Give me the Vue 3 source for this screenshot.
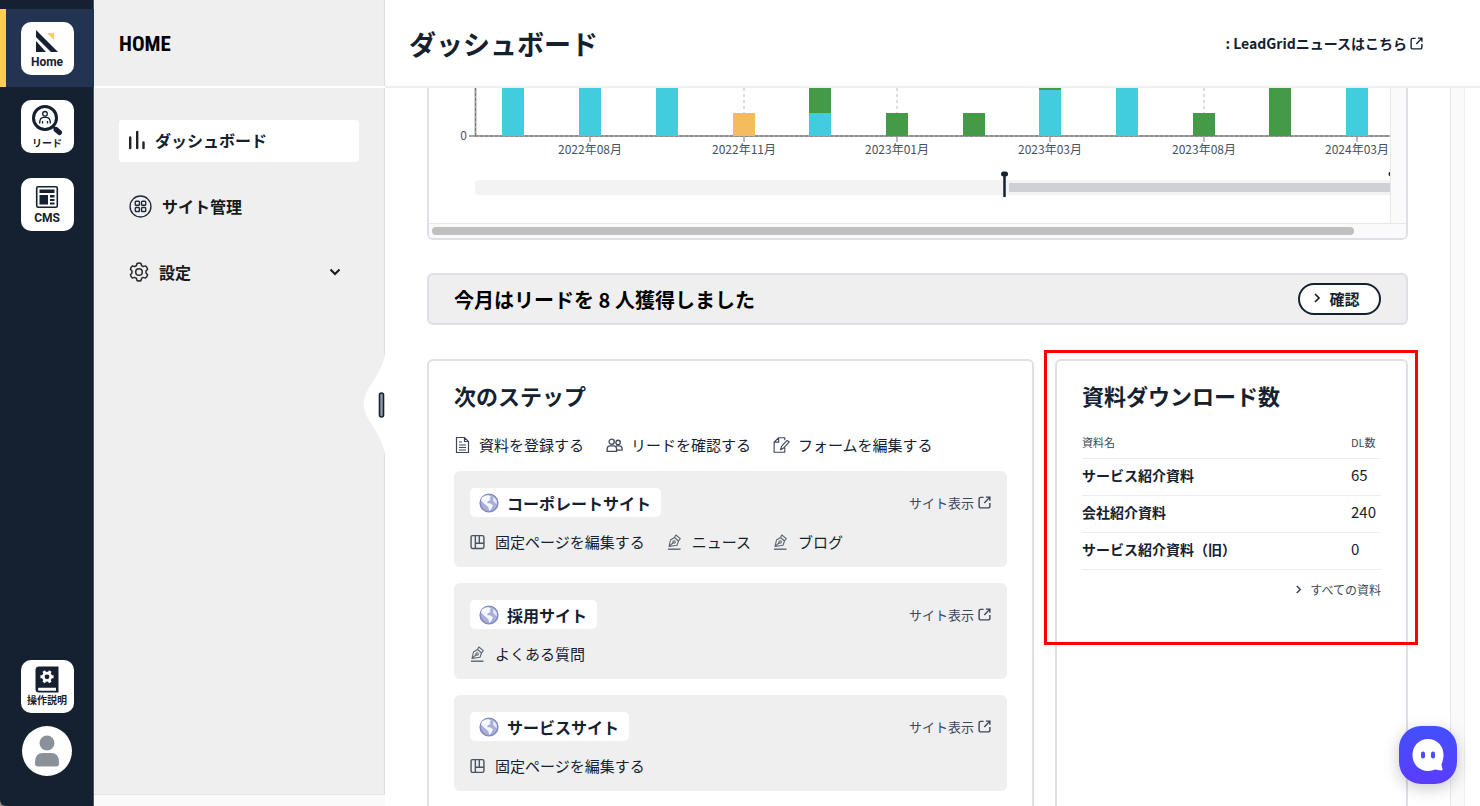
<script setup>
const menu = [
  { label: 'ダッシュボード', icon: 'bars', width: 16, height: 20, active: true },
  { label: 'サイト管理', icon: 'grid', width: 23, height: 23 },
  { label: '設定', icon: 'gear', width: 20, height: 20, expandable: true }
]

const quickLinks = [
  { label: '資料を登録する', icon: 'doc' },
  { label: 'リードを確認する', icon: 'people' },
  { label: 'フォームを編集する', icon: 'form' }
]

const sites = [
  {
    name: 'コーポレートサイト',
    links: [
      { label: '固定ページを編集する', icon: 'layout' },
      { label: 'ニュース', icon: 'pen' },
      { label: 'ブログ', icon: 'pen' }
    ]
  },
  { name: '採用サイト', links: [{ label: 'よくある質問', icon: 'pen' }] },
  { name: 'サービスサイト', links: [{ label: '固定ページを編集する', icon: 'layout' }] }
]

const downloads = [
  { name: 'サービス紹介資料', count: 65 },
  { name: '会社紹介資料', count: 240 },
  { name: 'サービス紹介資料（旧）', count: 0 }
]

const CYAN = '#41cddd'
const GREEN = '#459a47'
const ORANGE = '#f4bb5f'

// Each column is a stack of [colour, top, bottom] in chart units.
const columns = [
  { stack: [[CYAN, 0, 48]] },
  { stack: [[CYAN, 0, 48]], label: '2022年08月' },
  { stack: [[CYAN, 0, 48]] },
  { stack: [[ORANGE, 25, 48]], label: '2022年11月' },
  { stack: [[GREEN, 0, 25], [CYAN, 25, 48]] },
  { stack: [[GREEN, 25, 48]], label: '2023年01月' },
  { stack: [[GREEN, 25, 48]] },
  { stack: [[GREEN, 0, 2], [CYAN, 2, 48]], label: '2023年03月' },
  { stack: [[CYAN, 0, 48]] },
  { stack: [[GREEN, 25, 48]], label: '2023年08月' },
  { stack: [[GREEN, 0, 48]] },
  { stack: [[CYAN, 0, 48]], label: '2024年03月' }
].map((c, i) => ({ ...c, x: Math.round(84.4 + i * 76.7) }))
</script>

<template>
  <div class="app">
    <svg class="sprite" aria-hidden="true">
      <symbol id="i-bars" viewBox="1 0 16 20">
        <path d="M2.200 7.500v10.500M9.200 2v16M15.500 12.500v5.500" fill="none" stroke="#222" stroke-width="2.400" stroke-linecap="round" />
      </symbol>
      <symbol id="i-grid" viewBox="0 0 22 22">
        <g fill="none" stroke="#1d2a3c" stroke-width="1.300">
          <circle cx="11" cy="11" r="10" />
          <rect x="6" y="6" width="4" height="3.800" rx="0.800" />
          <rect x="12" y="6" width="4" height="3.800" rx="0.800" />
          <rect x="6" y="12" width="4" height="3.800" rx="0.800" />
          <rect x="12" y="12" width="4" height="3.800" rx="0.800" />
        </g>
      </symbol>
      <symbol id="i-gear" viewBox="0 0 20 20">
        <g fill="none" stroke="#2a2a2a" stroke-width="1.500" stroke-linejoin="round">
          <path d="M8 1.500Q10 .5 12 1.500L12.600 3.800Q13.400 4 14.200 4.600L16.500 3.900Q18.200 5.200 18.600 7.300L17 9V11L18.600 12.700Q18 15 16.500 16.100L14.200 15.400Q13.400 16 12.600 16.200L12 18.500Q10 19.500 8 18.500L7.400 16.200Q6.600 16 5.800 15.400L3.500 16.100Q1.900 15 1.400 12.700L3 11V9L1.400 7.300Q1.900 5 3.500 3.900L5.800 4.600Q6.600 4 7.400 3.800Z" />
          <circle cx="10" cy="10" r="3.300" />
        </g>
      </symbol>
      <symbol id="i-out" viewBox="0 0 14 14">
        <path d="M6 1.500H3A1.700 1.700 0 0 0 1.200 3.200V11A1.700 1.700 0 0 0 3 12.800H11A1.700 1.700 0 0 0 12.800 11V7.500M8.500 1.200H12.800V5.200M12.800 1.200L6.800 7.600" fill="none" stroke="currentColor" stroke-width="1.500" />
      </symbol>
      <symbol id="i-doc" viewBox="0 0 16 18">
        <path d="M2 1.500H10L14 5.500V16.500H2ZM10 1.500V5.500H14M4.500 6H7.500M4.500 9H11.500M4.500 11.500H11.500M4.500 14H11.500" fill="none" stroke="#3b4757" stroke-width="1.200" />
      </symbol>
      <symbol id="i-people" viewBox="0 0 18 18">
        <g fill="none" stroke="#3f4b5b" stroke-width="1.400" stroke-linejoin="round">
          <circle cx="6" cy="5.500" r="2.700" />
          <circle cx="12.800" cy="6.300" r="2.300" />
          <path d="M1.200 15.800V13A3.300 3.300 0 0 1 4.500 10H8A3.300 3.300 0 0 1 11.200 13V15.800ZM11.200 14.500H17V12.500A3 3 0 0 0 14 10H10.500" />
        </g>
      </symbol>
      <symbol id="i-form" viewBox="0 0 18 18">
        <path d="M12.500 4V1.300H6L1.200 6V16.700H12.500V12M6 1.300V6H1.200M8 14L9 10.500L15 4.200L17.200 5.800L11.200 12.300Z" fill="none" stroke="#3b4757" stroke-width="1.200" stroke-linejoin="round" />
      </symbol>
      <symbol id="i-layout" viewBox="0 0 14 14">
        <path d="M2.500 1H11.500Q13 1 13 2.500V11.500Q13 13 11.500 13H2.500Q1 13 1 11.500V2.500Q1 1 2.500 1ZM5 1V13M8.700 1V8.200M5 8.200H13" fill="none" stroke="#485362" stroke-width="1.300" />
      </symbol>
      <symbol id="i-pen" viewBox="0 0 14 16">
        <g fill="none" stroke="#5a6573" stroke-width="1.100" stroke-linejoin="round">
          <path d="M1.500 12.500L3 6L7 3.500L11 7L9.500 11.200ZM7 3.500L8.300 1L12.800 4.700L11 7M1.800 12.200L6 8.500" />
          <circle cx="6.600" cy="8" r="1.200" />
          <path d="M.5 15.200H13" stroke-width="1.400" />
        </g>
      </symbol>
      <symbol id="i-globe" viewBox="0 0 20 20">
        <circle cx="10" cy="10" r="8.900" fill="#a9afd9" stroke="#8188bf" stroke-width="1.400" />
        <path d="M3 4.500Q6 2 9.500 2.200L12 3.500L10.500 5.500L11.800 7L9 8L8 10L11.500 10.500L14 12.500L12.500 15.500L10.500 18L9.500 14.500L7 12L5 10.500L2 7.500Z" fill="#f7f8fd" />
        <path d="M14.500 3.500L17.500 7L18 11L16 10L14 7.500Z" fill="#e5e8f6" />
      </symbol>
      <symbol id="i-right" viewBox="0 0 8 10">
        <path d="M2 1L6 5L2 9" fill="none" stroke="currentColor" stroke-width="1.700" />
      </symbol>
    </svg>

    <nav class="rail" aria-label="メイン">
      <a href="#home" class="rail-item current">
        <span class="tile">
          <svg width="24" height="24" viewBox="0 0 24 24" aria-hidden="true">
            <path d="M1 1L23 23H16L1 8ZM1 12L11 23H1Z" fill="#152130" />
            <path d="M12 4H19V11Z" fill="#ffcf4d" />
          </svg>
          <span class="tile-en">Home</span>
        </span>
      </a>
      <a href="#leads" class="rail-item">
        <span class="tile">
          <svg width="32" height="32" viewBox="0 0 32 32" aria-hidden="true">
            <circle cx="14" cy="14" r="11.500" fill="none" stroke="#152130" stroke-width="3" />
            <path d="M21.500 22L24 24.500" stroke="#152130" stroke-width="2" />
            <path d="M25 25.500L28.500 28.500" stroke="#152130" stroke-width="5" stroke-linecap="round" />
            <circle cx="14" cy="9.800" r="2.300" fill="none" stroke="#152130" stroke-width="1.300" />
            <path d="M8.700 19.500Q8.500 13.500 12.500 13.300H15.500Q19.500 13.500 19.300 19.500M11.500 19.500V17M16.500 19.500V17" fill="none" stroke="#152130" stroke-width="1.300" />
          </svg>
          <span class="tile-ja">リード</span>
        </span>
      </a>
      <a href="#cms" class="rail-item">
        <span class="tile">
          <svg width="24" height="24" viewBox="0 0 24 24" aria-hidden="true">
            <rect x="1.700" y="1.700" width="20.600" height="20.600" rx="1.500" fill="none" stroke="#152130" stroke-width="1.600" />
            <path d="M4.500 4.500H19.500V8H4.500ZM4.500 10H13V19.500H4.500ZM15 10H19.500V12.500H15ZM15 14H19.500V16H15ZM15 17.500H19.500V19.500H15Z" fill="#152130" />
          </svg>
          <span class="tile-en">CMS</span>
        </span>
      </a>
      <div class="rail-foot">
        <a href="#manual" class="tile">
          <svg width="24" height="27" viewBox="0 0 24 27" aria-hidden="true">
            <path d="M4 .5H23.500V26.500H4Q.5 26.500 .5 23V4Q.5 .5 4 .5Z" fill="#152130" />
            <path d="M3.500 21.800H21V24.800H3.500Q2.300 23.300 3.500 21.800Z" fill="#fff" />
            <circle cx="12" cy="10.800" r="3.700" fill="none" stroke="#fff" stroke-width="2.600" />
            <path d="M12 4.200V7M12 14.600V17.400M6.300 7.500L8.700 8.900M15.300 12.700L17.700 14.100M17.700 7.500L15.300 8.900M8.700 12.700L6.300 14.100" transform="rotate(30 12 10.800)" stroke="#fff" stroke-width="3" />
          </svg>
          <span class="tile-ja">操作説明</span>
        </a>
        <button class="avatar" type="button" aria-label="アカウント">
          <svg width="26" height="32" viewBox="0 0 26 32" aria-hidden="true">
            <circle cx="13" cy="8" r="7.500" fill="#8b9199" />
            <path d="M1 28.500V27Q1 18 9 18H17Q25 18 25 27V28.500Q25 31.500 22 31.500H4Q1 31.500 1 28.500Z" fill="#8b9199" />
          </svg>
        </button>
      </div>
    </nav>

    <aside class="side">
      <h2 class="side-title">HOME</h2>
      <nav class="menu" aria-label="HOME">
        <a v-for="m in menu" :key="m.label" href="#menu" class="menu-item" :class="{ active: m.active }">
          <svg :width="m.width" :height="m.height" aria-hidden="true"><use :href="'#i-' + m.icon" /></svg>
          <span>{{ m.label }}</span>
          <svg v-if="m.expandable" class="caret" width="12" height="8" viewBox="0 0 12 8" aria-hidden="true">
            <path d="M1.500 1.500L6 6L10.500 1.500" fill="none" stroke="#1a1a1a" stroke-width="2" />
          </svg>
        </a>
      </nav>
      <div class="side-track"></div>
      <button class="notch" type="button" aria-label="サイドバーを閉じる">
        <svg width="22" height="104" viewBox="0 0 22 104" aria-hidden="true">
          <path d="M22 0C20 24 1 34 1 52S20 80 22 104Z" fill="#fff" />
          <rect x="16.500" y="41" width="4" height="24" rx="2" fill="#8f9aa3" stroke="#152130" stroke-width="1.600" />
        </svg>
      </button>
    </aside>

    <div class="page">
      <header class="top">
        <h1>ダッシュボード</h1>
        <a href="#news" class="news">: LeadGridニュースはこちら<svg width="13" height="13" aria-hidden="true"><use href="#i-out" /></svg></a>
      </header>
      <div class="body">
        <main class="content">
          <section class="chart-card" aria-label="リード推移">
            <div class="chart-row">
              <div class="chart-view">
                <svg class="chart" width="980" height="135" viewBox="0 0 980 135" role="img" aria-label="月別リード数">
                  <g v-for="(c, i) in columns" :key="i">
                    <template v-if="c.label">
                      <line :x1="c.x" :x2="c.x" y1="0" y2="48" stroke="#ddd" stroke-width="2" stroke-dasharray="3 3" />
                      <line :x1="c.x" :x2="c.x" y1="48" y2="54" stroke="#777" />
                      <text :x="c.x" y="66" text-anchor="middle">{{ c.label }}</text>
                    </template>
                  </g>
                  <line x1="46.500" x2="46.500" y1="0" y2="48" stroke="#a5a5a5" stroke-width="2" />
                  <line x1="40" x2="980" y1="48" y2="48" stroke="#a5a5a5" stroke-width="2" />
                  <line x1="46.500" x2="46.500" y1="0" y2="48" stroke="#777" stroke-dasharray="3 2" />
                  <line x1="46" x2="980" y1="48" y2="48" stroke="#777" stroke-dasharray="3 2" />
                  <g v-for="(c, i) in columns" :key="'b' + i">
                    <rect v-for="(s, j) in c.stack" :key="j" :x="c.x - 11" :y="s[1]" width="22" :height="s[2] - s[1]" :fill="s[0]" />
                  </g>
                  <text x="38" y="52" text-anchor="end">0</text>
                  <rect x="46" y="92" width="940" height="15" rx="4" fill="#f3f3f3" />
                  <rect x="580" y="95" width="400" height="9" fill="#cdd0d5" />
                  <path d="M575.500 86V109" stroke="#152130" stroke-width="2.500" />
                  <rect x="572" y="83.500" width="7" height="5" rx="2.500" fill="#152130" />
                  <circle cx="962" cy="86" r="2.500" fill="#152130" />
                </svg>
              </div>
              <div class="chart-gutter"></div>
            </div>
            <div class="chart-scroll"><div class="thumb"></div></div>
          </section>

          <section class="notice">
            <p>今月はリードを 8 人獲得しました</p>
            <button type="button" class="confirm">
              <svg width="8" height="10" aria-hidden="true"><use href="#i-right" /></svg>確認
            </button>
          </section>

          <div class="cards">
            <section class="card">
              <h2>次のステップ</h2>
              <div class="links quick">
                <a v-for="q in quickLinks" :key="q.label" href="#step">
                  <svg width="17" height="18" aria-hidden="true"><use :href="'#i-' + q.icon" /></svg>{{ q.label }}
                </a>
              </div>
              <div class="sites">
                <article v-for="s in sites" :key="s.name" class="site">
                  <div class="site-head">
                    <h3><svg width="20" height="20" aria-hidden="true"><use href="#i-globe" /></svg>{{ s.name }}</h3>
                    <a href="#site" class="view">サイト表示<svg width="13" height="13" aria-hidden="true"><use href="#i-out" /></svg></a>
                  </div>
                  <div class="links edits">
                    <a v-for="l in s.links" :key="l.label" href="#edit">
                      <svg width="15" height="16" aria-hidden="true"><use :href="'#i-' + l.icon" /></svg>{{ l.label }}
                    </a>
                  </div>
                </article>
              </div>
            </section>

            <section class="card">
              <h2>資料ダウンロード数</h2>
              <table>
                <thead>
                  <tr><th scope="col">資料名</th><th scope="col" class="count">DL数</th></tr>
                </thead>
                <tbody>
                  <tr v-for="d in downloads" :key="d.name">
                    <th scope="row">{{ d.name }}</th>
                    <td class="count">{{ d.count }}</td>
                  </tr>
                </tbody>
              </table>
              <a href="#all" class="all"><svg width="7" height="9" aria-hidden="true"><use href="#i-right" /></svg>すべての資料</a>
              <div class="marker"></div>
            </section>
          </div>
        </main>
        <div class="page-track"></div>
        <div class="page-edge"></div>
      </div>
    </div>

    <button class="chat" type="button" aria-label="チャット">
      <svg width="32" height="34" viewBox="0 0 32 34" aria-hidden="true">
        <path d="M16 1C7 1 .5 7.800 .5 17S7 33 16 33C19 33 21 32 23 31.500C25.500 31.500 28 33 30 32.300C31.500 31.500 29.500 29 29.500 26.500C30.500 23.500 31.500 20.500 31.500 17C31.500 7.800 25 1 16 1Z" fill="#fff" />
        <rect x="9" y="13.500" width="4" height="7" rx="2" fill="#4b4bff" />
        <rect x="19" y="13.500" width="4" height="7" rx="2" fill="#4b4bff" />
      </svg>
    </button>
  </div>
</template>

<style>
body {
  margin: 0;
  overflow: hidden;
}
</style>

<style scoped>
* {
  box-sizing: border-box;
}
.app {
  display: flex;
  height: 100vh;
  overflow: hidden;
  background: #8f8a7c;
  color: #152130;
  font-family: "Noto Sans CJK JP", "Noto Sans", sans-serif;
  font-size: 15px;
}
.sprite {
  position: absolute;
  width: 0;
  height: 0;
}
h1, h2, h3, p {
  margin: 0;
}
a {
  color: inherit;
  text-decoration: none;
}
button {
  font-family: inherit;
  color: inherit;
  padding: 0;
  border: 0;
  cursor: pointer;
}
svg {
  flex: none;
}

.rail {
  display: flex;
  flex-direction: column;
  flex: none;
  width: 94px;
  padding-top: 9px;
  background: #152130;
  border-bottom-left-radius: 6px;
  box-shadow: inset -1px 0 #4c5766;
}
.rail-item {
  display: flex;
  justify-content: center;
  padding: 13px 0 12px;
}
.rail-item.current {
  background: #233452;
  border-left: 6px solid #ffcf4d;
  padding-right: 6px;
}
.tile {
  display: flex;
  flex-direction: column;
  align-items: center;
  justify-content: center;
  width: 53px;
  height: 53px;
  border-radius: 10px;
  background: #fff;
}
.tile-en {
  margin-top: 2px;
  font: 700 12px/14px Roboto, sans-serif;
}
.tile-ja {
  font-size: 10px;
  line-height: 14px;
  font-weight: 700;
}
.rail-foot {
  display: flex;
  flex-direction: column;
  align-items: center;
  gap: 13px;
  margin-top: auto;
  padding-bottom: 30px;
}
.avatar {
  display: flex;
  align-items: center;
  justify-content: center;
  width: 50px;
  height: 50px;
  border-radius: 50%;
  background: #fff;
}

.side {
  position: relative;
  display: flex;
  flex-direction: column;
  flex: none;
  width: 291px;
  background: #efefef;
  box-shadow: inset -2px 0 1px -1px #dcdcdc;
}
.side-title {
  height: 88px;
  padding-left: 25px;
  border-bottom: 2px solid #fff;
  color: #000;
  font: 700 21px/88px "Liberation Sans Narrow", "Roboto Condensed", "DejaVu Sans Condensed", sans-serif;
}
.menu {
  display: flex;
  flex-direction: column;
  gap: 24px;
  padding: 32px 26px 0 25px;
}
.menu-item {
  display: flex;
  align-items: center;
  gap: 10px;
  height: 42px;
  padding: 0 18px 2px 10px;
  border-radius: 3px;
  color: #1a1a1a;
  font-size: 16px;
  font-weight: 700;
}
.menu-item.active {
  background: #fff;
  color: #152130;
}
.caret {
  margin-left: auto;
}
.side-track {
  height: 12px;
  margin-top: auto;
  background: #fafafa;
  border-top: 1px solid #e6e6e6;
}
.notch {
  position: absolute;
  right: 0;
  top: 50%;
  width: 22px;
  height: 104px;
  margin-top: -51px;
  background: none;
}
.notch svg {
  display: block;
}

.page {
  display: flex;
  flex-direction: column;
  flex: 1;
  min-width: 0;
  background: #fff;
}
.top {
  display: flex;
  align-items: center;
  justify-content: space-between;
  flex: none;
  height: 88px;
  padding: 0 57px 0 24px;
  border-bottom: 2px solid #efefef;
}
h1 {
  font-size: 27px;
}
.news {
  display: flex;
  align-items: center;
  gap: 3px;
  font-size: 14px;
  font-weight: 700;
}
.body {
  display: flex;
  flex: 1;
  min-height: 0;
  overflow: hidden;
}
.content {
  flex: 1;
  min-width: 0;
  padding: 0 42px;
}
.page-track {
  width: 15px;
  background: #fafafa;
  border-left: 1px solid #e8e8e8;
  border-right: 1px solid #efefef;
}
.page-edge {
  width: 15px;
}

.chart-card {
  border: 2px solid #dfe0e6;
  border-top: 0;
  border-radius: 0 0 6px 6px;
  overflow: hidden;
}
.chart-row {
  display: flex;
}
.chart-view {
  flex: 1;
  min-width: 0;
  overflow: hidden;
}
.chart {
  display: block;
}
.chart text {
  font-size: 12px;
  fill: #455263;
}
.chart-gutter {
  width: 16px;
  background: #fafafa;
  border-left: 1px solid #e8e8e8;
}
.chart-scroll {
  height: 15px;
  padding: 3px;
  background: #fafafa;
  border-top: 1px solid #e8e8e8;
}
.thumb {
  width: 95%;
  height: 8px;
  border-radius: 4px;
  background: #c0c0c0;
}

.notice {
  display: flex;
  align-items: center;
  justify-content: space-between;
  height: 52px;
  margin: 33px 0 34px;
  padding: 0 25px;
  background: #efefef;
  border: 2px solid #dfe0e6;
  border-radius: 6px;
  color: #000;
}
.notice p {
  font-size: 20px;
  font-weight: 700;
}
.confirm {
  display: flex;
  align-items: center;
  justify-content: center;
  gap: 8px;
  width: 83px;
  height: 32px;
  padding: 0 6px 2px 0;
  border: 2px solid #152130;
  border-radius: 16px;
  background: #fff;
  color: #152130;
  font-size: 15px;
  font-weight: 700;
}

.cards {
  display: grid;
  grid-template-columns: 607fr 353fr;
  gap: 21px;
}
.card {
  position: relative;
  padding: 18px 25px 28px;
  border: 2px solid #dfe0e6;
  border-radius: 6px;
}
.card h2 {
  font-size: 22px;
  line-height: 32px;
}
.links {
  display: flex;
  align-items: center;
  gap: 22px;
  line-height: 20px;
}
.links a {
  display: flex;
  align-items: center;
  gap: 8px;
}
.quick {
  margin: 24px 0 16px;
}
.sites {
  display: grid;
  gap: 16px;
}
.site {
  height: 96px;
  padding: 17px 16px;
  border-radius: 6px;
  background: #efefef;
}
.edits a {
  gap: 10px;
}
.site-head {
  display: flex;
  align-items: center;
  justify-content: space-between;
  margin-bottom: 15px;
}
.site h3 {
  display: flex;
  align-items: center;
  gap: 8px;
  height: 29px;
  padding: 0 10px 0 9px;
  border-radius: 5px;
  background: #fff;
  font-size: 16px;
}
.view {
  display: flex;
  align-items: center;
  gap: 4px;
  color: #3b4757;
  font-size: 13px;
}

table {
  width: 100%;
  margin-top: 17px;
  border-collapse: collapse;
}
tr {
  height: 37px;
  border-bottom: 1px solid #ededed;
}
th, td {
  padding: 0 0 4px;
  text-align: left;
  font-size: 14px;
}
thead tr {
  height: 30px;
}
thead th {
  padding-bottom: 2px;
  color: #3b4757;
  font-size: 11px;
  font-weight: 400;
}
.count {
  width: 30px;
}
td.count {
  font-size: 15px;
}
.all {
  display: flex;
  align-items: center;
  justify-content: flex-end;
  gap: 8px;
  margin-top: 10px;
  color: #3b4757;
  font-size: 12px;
  line-height: 20px;
}
.marker {
  position: absolute;
  top: -11px;
  left: -13px;
  right: -12px;
  height: 295px;
  border: 3px solid #f00;
  pointer-events: none;
}

.chat {
  position: fixed;
  right: 23px;
  bottom: 22px;
  display: flex;
  align-items: center;
  justify-content: center;
  width: 58px;
  height: 58px;
  border-radius: 22px;
  background: linear-gradient(#4350ff, #5a3cff);
  box-shadow: 0 4px 16px rgba(0, 0, 0, 0.22);
}
</style>
